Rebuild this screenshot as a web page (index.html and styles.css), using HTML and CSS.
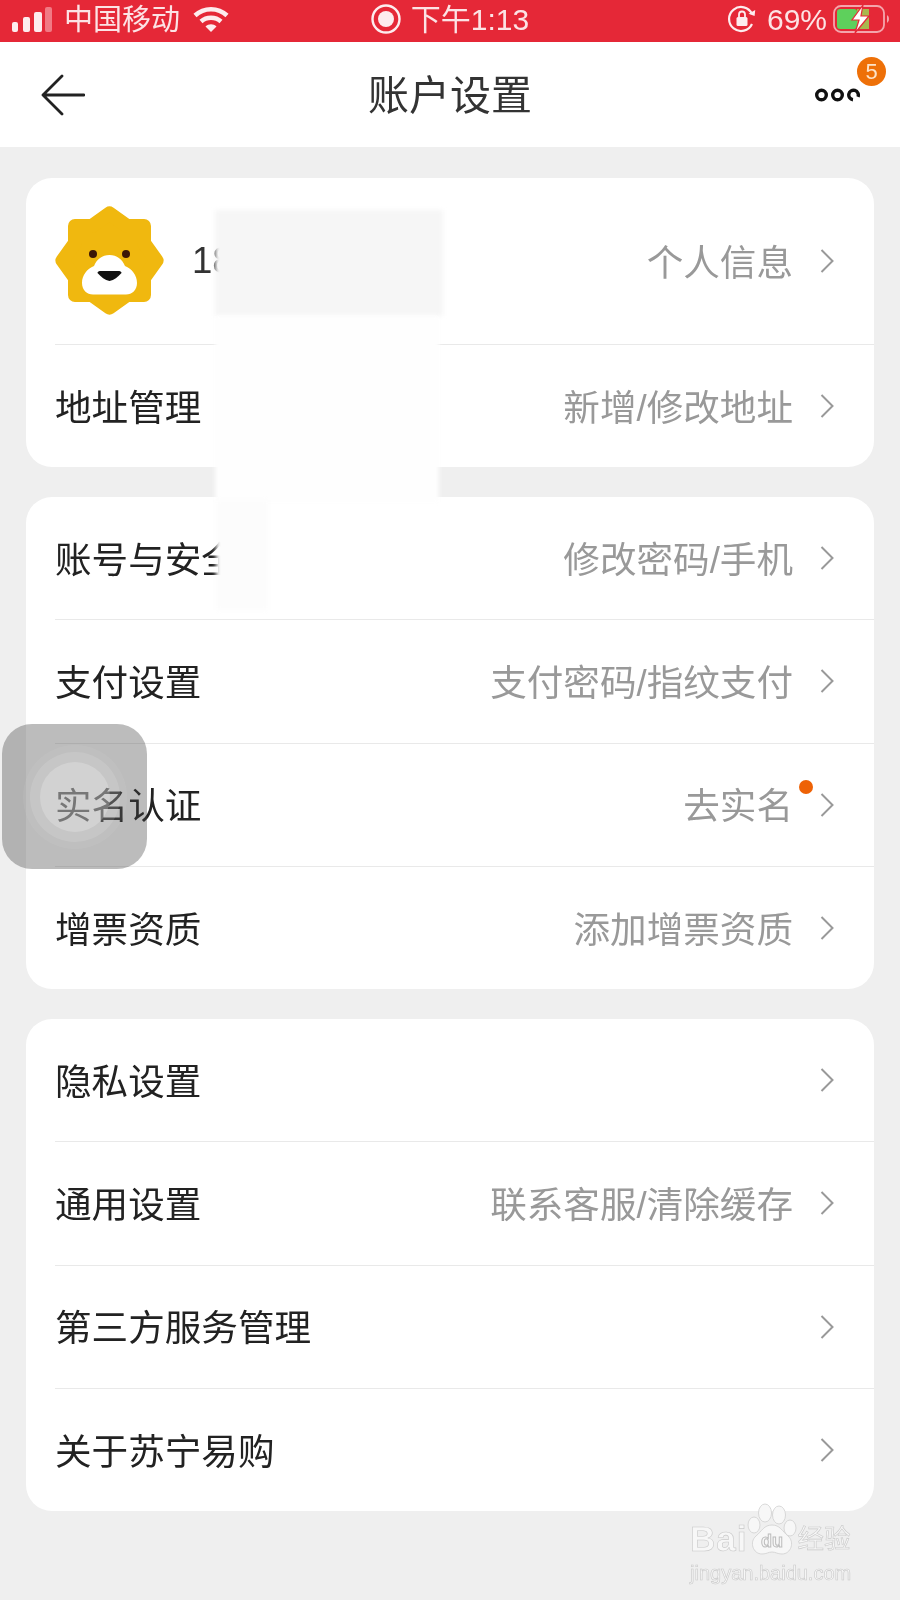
FILE: index.html
```html
<!DOCTYPE html>
<html>
  <head>
    <meta charset="UTF-8"/>
    <title>账户设置</title>
    <link rel="stylesheet" href="styles.css">
  </head>
  <body>
    <div class="screen">
      <header class="status">
        <div class="status-left">
          <svg class="signal" width="40" height="25" viewBox="0 0 40 25">
            <rect x="0" y="15" width="6" height="10" rx="2" fill="#fdecee"/>
            <rect x="11" y="10" width="7" height="15" rx="2" fill="#fdecee"/>
            <rect x="22" y="5" width="8" height="20" rx="2" fill="#fdecee"/>
            <rect x="33" y="0" width="7" height="25" rx="2" fill="#f17a84"/>
          </svg>
          <span class="carrier">中国移动</span>
          <svg class="wifi" width="36" height="26" viewBox="0 0 36 26">
            <path d="M2 9.500C11 1 25 1 34 9.500" fill="none" stroke="#fdecee" stroke-width="4.500"/>
            <path d="M8 15.500C13.500 10.500 22.500 10.500 28 15.500" fill="none" stroke="#fdecee" stroke-width="4.500"/>
            <path d="M12.500 20.500C15.500 17.500 20.500 17.500 23.500 20.500L18 26Z" fill="#fdecee"/>
          </svg>
        </div>
        <div class="status-mid">
          <svg width="30" height="30" viewBox="0 0 30 30">
            <circle cx="15" cy="15" r="13.500" fill="none" stroke="#fdecee" stroke-width="2.400"/>
            <circle cx="15" cy="15" r="8" fill="#fdecee"/>
          </svg>
          <span class="clock">下午1:13</span>
        </div>
        <div class="status-right">
          <svg width="28" height="28" viewBox="0 0 28 28">
            <path d="M24 19A12 12 0 1 1 24 9" fill="none" stroke="#fdecee" stroke-width="2.200"/>
            <path d="M21 10L27.500 10L26 4Z" fill="#fdecee" transform="rotate(20 24 8)"/>
            <rect x="8.500" y="12" width="11" height="9" rx="1.500" fill="#fdecee"/>
            <path d="M11 12V9.500a3 3 0 0 1 6 0V12" fill="none" stroke="#fdecee" stroke-width="1.800"/>
          </svg>
          <span class="battery-pct">69%</span>
          <svg width="58" height="30" viewBox="0 0 58 30">
            <rect x="1" y="2" width="50" height="26" rx="7" fill="none" stroke="#f4a5ac" stroke-width="1.800"/>
            <rect x="4" y="5" width="20" height="20" rx="3" fill="#5ed05c"/>
            <rect x="24" y="5" width="12" height="20" fill="#a8b84e"/>
            <path d="M54 11v8a4 4 0 0 0 2-4a4 4 0 0 0-2-4Z" fill="#f4a5ac"/>
            <path d="M30 1L19 16H26L22 29L36 12H28Z" fill="#fff" stroke="#e52837" stroke-width="1.200"/>
          </svg>
        </div>
      </header>

      <nav class="navbar">
        <svg class="back" width="44" height="42" viewBox="0 0 44 42">
          <path d="M21 2L2 21L21 40M2 21H43" fill="none" stroke="#222" stroke-width="2.800" stroke-linecap="round" stroke-linejoin="round"/>
        </svg>
        <h1 class="title">账户设置</h1>
        <div class="more">
          <svg width="45" height="14" viewBox="0 0 45 14">
            <circle cx="6.500" cy="7" r="4.800" fill="none" stroke="#111" stroke-width="3.400"/>
            <circle cx="22.500" cy="7" r="4.800" fill="none" stroke="#111" stroke-width="3.400"/>
            <path d="M38 11.800A4.800 4.800 0 1 1 43 8.800" fill="none" stroke="#111" stroke-width="3.400"/>
          </svg>
          <span class="badge">5</span>
        </div>
      </nav>

      <main class="content">
        <section class="card">
          <a class="row row-user">
            <span class="row-label user-label">
              <svg class="logo" width="110" height="110" viewBox="0 0 110 110">
                <path d="M54.500 7.500L72 20H89V37L101.500 54.500L89 72V89H72L54.500 101.500L37 89H20V72L7.500 54.500L20 37V20H37Z" fill="#f0b80f" stroke="#f0b80f" stroke-width="14" stroke-linejoin="round"/>
                <path d="M27 77C27 69 32 63 39 60C42 53 47 49 54.500 49C62 49 67 53 70 60C77 63 82 69 82 77C82 84 77 88.500 71 88.500H38C32 88.500 27 84 27 77Z" fill="#fff"/>
                <circle cx="38" cy="48" r="4" fill="#3b1606"/>
                <circle cx="71" cy="48" r="4" fill="#3b1606"/>
                <path d="M42.500 67C42.500 65.500 44 65 46 65H63C65 65 66.500 65.500 66.500 67C63 71 59 74 54.500 75C50 74 46 71 42.500 67Z" fill="#111"/>
              </svg>
              <span class="phone">18</span>
            </span>
            <span class="row-value">个人信息</span>
            <svg class="chevron" width="14" height="24" viewBox="0 0 14 24"><path d="M1.500 1L12.500 12L1.500 23" fill="none" stroke="#999" stroke-width="2"/></svg>
          </a>
          <a class="row">
            <span class="row-label">地址管理</span>
            <span class="row-value">新增/修改地址</span>
            <svg class="chevron" width="14" height="24" viewBox="0 0 14 24"><path d="M1.500 1L12.500 12L1.500 23" fill="none" stroke="#999" stroke-width="2"/></svg>
          </a>
        </section>

        <section class="card">
          <a class="row">
            <span class="row-label">账号与安全</span>
            <span class="row-value">修改密码/手机</span>
            <svg class="chevron" width="14" height="24" viewBox="0 0 14 24"><path d="M1.500 1L12.500 12L1.500 23" fill="none" stroke="#999" stroke-width="2"/></svg>
          </a>
          <a class="row">
            <span class="row-label">支付设置</span>
            <span class="row-value">支付密码/指纹支付</span>
            <svg class="chevron" width="14" height="24" viewBox="0 0 14 24"><path d="M1.500 1L12.500 12L1.500 23" fill="none" stroke="#999" stroke-width="2"/></svg>
          </a>
          <a class="row">
            <span class="row-label">实名认证</span>
            <span class="row-value has-dot">去实名</span>
            <svg class="chevron" width="14" height="24" viewBox="0 0 14 24"><path d="M1.500 1L12.500 12L1.500 23" fill="none" stroke="#999" stroke-width="2"/></svg>
          </a>
          <a class="row">
            <span class="row-label">增票资质</span>
            <span class="row-value">添加增票资质</span>
            <svg class="chevron" width="14" height="24" viewBox="0 0 14 24"><path d="M1.500 1L12.500 12L1.500 23" fill="none" stroke="#999" stroke-width="2"/></svg>
          </a>
        </section>

        <section class="card">
          <a class="row">
            <span class="row-label">隐私设置</span>
            <span class="row-value"></span>
            <svg class="chevron" width="14" height="24" viewBox="0 0 14 24"><path d="M1.500 1L12.500 12L1.500 23" fill="none" stroke="#999" stroke-width="2"/></svg>
          </a>
          <a class="row">
            <span class="row-label">通用设置</span>
            <span class="row-value">联系客服/清除缓存</span>
            <svg class="chevron" width="14" height="24" viewBox="0 0 14 24"><path d="M1.500 1L12.500 12L1.500 23" fill="none" stroke="#999" stroke-width="2"/></svg>
          </a>
          <a class="row">
            <span class="row-label">第三方服务管理</span>
            <span class="row-value"></span>
            <svg class="chevron" width="14" height="24" viewBox="0 0 14 24"><path d="M1.500 1L12.500 12L1.500 23" fill="none" stroke="#999" stroke-width="2"/></svg>
          </a>
          <a class="row">
            <span class="row-label">关于苏宁易购</span>
            <span class="row-value"></span>
            <svg class="chevron" width="14" height="24" viewBox="0 0 14 24"><path d="M1.500 1L12.500 12L1.500 23" fill="none" stroke="#999" stroke-width="2"/></svg>
          </a>
        </section>
      </main>

      <!-- smudged-out phone number -->
      <div class="smudge smudge-top"></div>
      <div class="smudge smudge-mid"></div>
      <div class="smudge smudge-low"></div>

      <div class="touch-button">
        <div class="touch-ring-outer">
          <div class="touch-ring-mid">
            <div class="touch-ring-inner"></div>
          </div>
        </div>
      </div>

      <div class="watermark">
        <div class="wm-logo">
          <span class="wm-bai">Bai</span>
          <svg class="wm-paw" width="50" height="52" viewBox="0 0 50 52">
            <g fill="#f7f7f7" stroke="#cfcfcf" stroke-width="0.800">
              <ellipse cx="18" cy="10" rx="6.500" ry="9"/>
              <ellipse cx="32" cy="12" rx="6.500" ry="9"/>
              <ellipse cx="7" cy="22" rx="6" ry="8"/>
              <ellipse cx="43" cy="25" rx="6" ry="8"/>
              <path d="M25 22C33 22 35 28 41 33C48 39 44 51 35 51C30 51 29 49 25 49C21 49 20 51 15 51C6 51 2 39 9 33C15 28 17 22 25 22Z"/>
            </g>
            <text x="25" y="44" text-anchor="middle" class="wm-du">du</text>
          </svg>
          <span class="wm-cn">经验</span>
        </div>
        <div class="wm-url">jingyan.baidu.com</div>
      </div>
    </div>
  </body>
</html>
```

FILE: styles.css
```css
html, body { padding: 0; margin: 0; }
body {
    background: #efefef;
    font-family: "Liberation Sans", "Noto Sans CJK SC", sans-serif;
}
.screen {
    position: relative;
    width: 900px;
    height: 1600px;
    overflow: hidden;
    background: #efefef;
    filter: blur(0.4px);
}

/* status bar */
.status {
    height: 42px;
    padding-bottom: 4px;
    box-sizing: border-box;
    background: #e52837;
    color: #fce3e5;
    display: grid;
    grid-template-columns: 1fr auto 1fr;
    align-items: center;
    font-size: 29px;
    line-height: 30px;
}
.status-left, .status-mid, .status-right {
    display: flex;
    align-items: center;
}
.status-left { padding-left: 12px; }
.carrier { margin: 2px 0 0 12px; }
.wifi { margin-left: 13px; }
.status-mid { gap: 10px; }
.clock { margin-top: 2px; font-size: 30px; white-space: nowrap; }
.status-right { justify-content: flex-end; padding-right: 9px; }
.battery-pct { margin: 2px 6px 0 11px; font-size: 30px; }

/* nav */
.navbar {
    position: relative;
    height: 105px;
    background: #fff;
    display: flex;
    align-items: center;
    justify-content: space-between;
    padding: 0 40px 0 41px;
}
.title {
    margin: 0;
    padding-bottom: 6px;
    font-size: 41px;
    font-weight: 400;
    color: #333;
}
.more { position: relative; display: flex; }
.badge {
    position: absolute;
    left: 42px;
    top: -31px;
    width: 29px;
    height: 29px;
    border-radius: 50%;
    background: #ee7008;
    color: #fde3c8;
    font-size: 22px;
    line-height: 29px;
    text-align: center;
}

/* list */
.content {
    display: flex;
    flex-direction: column;
    gap: 30px;
    padding: 31px 26px 0;
}
.card {
    background: #fff;
    border-radius: 26px;
    overflow: hidden;
}
.row {
    display: flex;
    align-items: center;
    height: 123.33px;
    margin-left: 29px;
    padding-right: 40px;
    border-top: 1px solid #e9e9e9;
    box-sizing: border-box;
}
.row:first-child { border-top: 0; height: 122px; }
.row-user { height: 166px !important; }
.row-label {
    margin-top: -2px;
    font-size: 36.6px;
    color: #222;
    white-space: nowrap;
}
.user-label { display: flex; align-items: center; margin-top: 0; }
.logo { margin-right: 27px; overflow: visible; }
.phone { color: #333; }
.row-value {
    position: relative;
    flex: 1;
    margin-top: -2px;
    text-align: right;
    font-size: 36.6px;
    color: #999;
    margin-right: 27px;
    white-space: nowrap;
}
.has-dot::after {
    content: "";
    position: absolute;
    right: -20px;
    top: 3px;
    width: 14px;
    height: 14px;
    border-radius: 50%;
    background: #ee6206;
}
.chevron { flex: none; }

/* covered part of the screenshot */
.smudge { position: absolute; filter: blur(2px); }
.smudge-top {
    left: 215px;
    top: 210px;
    width: 228px;
    height: 106px;
    background: #f6f6f6;
}
.smudge-mid {
    left: 215px;
    top: 316px;
    width: 224px;
    height: 186px;
    background: #fefefe;
}
.smudge-low {
    left: 216px;
    top: 500px;
    width: 52px;
    height: 110px;
    background: #fcfcfc;
}

/* floating assistive button */
.touch-button {
    position: absolute;
    left: 2px;
    top: 724px;
    width: 145px;
    height: 145px;
    border-radius: 30px;
    background: rgba(70, 70, 70, 0.36);
    display: flex;
    align-items: center;
    justify-content: center;
}
.touch-ring-outer, .touch-ring-mid, .touch-ring-inner {
    border-radius: 50%;
    display: flex;
    align-items: center;
    justify-content: center;
}
.touch-ring-outer { width: 104px; height: 104px; background: rgba(255, 255, 255, 0.06); }
.touch-ring-mid { width: 90px; height: 90px; background: rgba(255, 255, 255, 0.12); }
.touch-ring-inner { width: 70px; height: 70px; background: rgba(255, 255, 255, 0.22); }

/* watermark */
.watermark {
    position: absolute;
    left: 690px;
    top: 1503px;
    width: 170px;
    color: #f7f7f7;
    -webkit-text-stroke: 0.6px #c9c9c9;
}
.wm-logo { display: flex; align-items: flex-end; height: 52px; }
.wm-bai {
    font-size: 35px;
    font-weight: 700;
    line-height: 32px;
    letter-spacing: 1px;
}
.wm-paw { flex: none; }
.wm-du {
    font-size: 18px;
    font-weight: 700;
    fill: #f7f7f7;
    stroke: #bdbdbd;
}
.wm-cn { font-size: 26.5px; line-height: 32px; white-space: nowrap; }
.wm-url { font-size: 20px; line-height: 24px; margin-top: 6px; white-space: nowrap; }
```
